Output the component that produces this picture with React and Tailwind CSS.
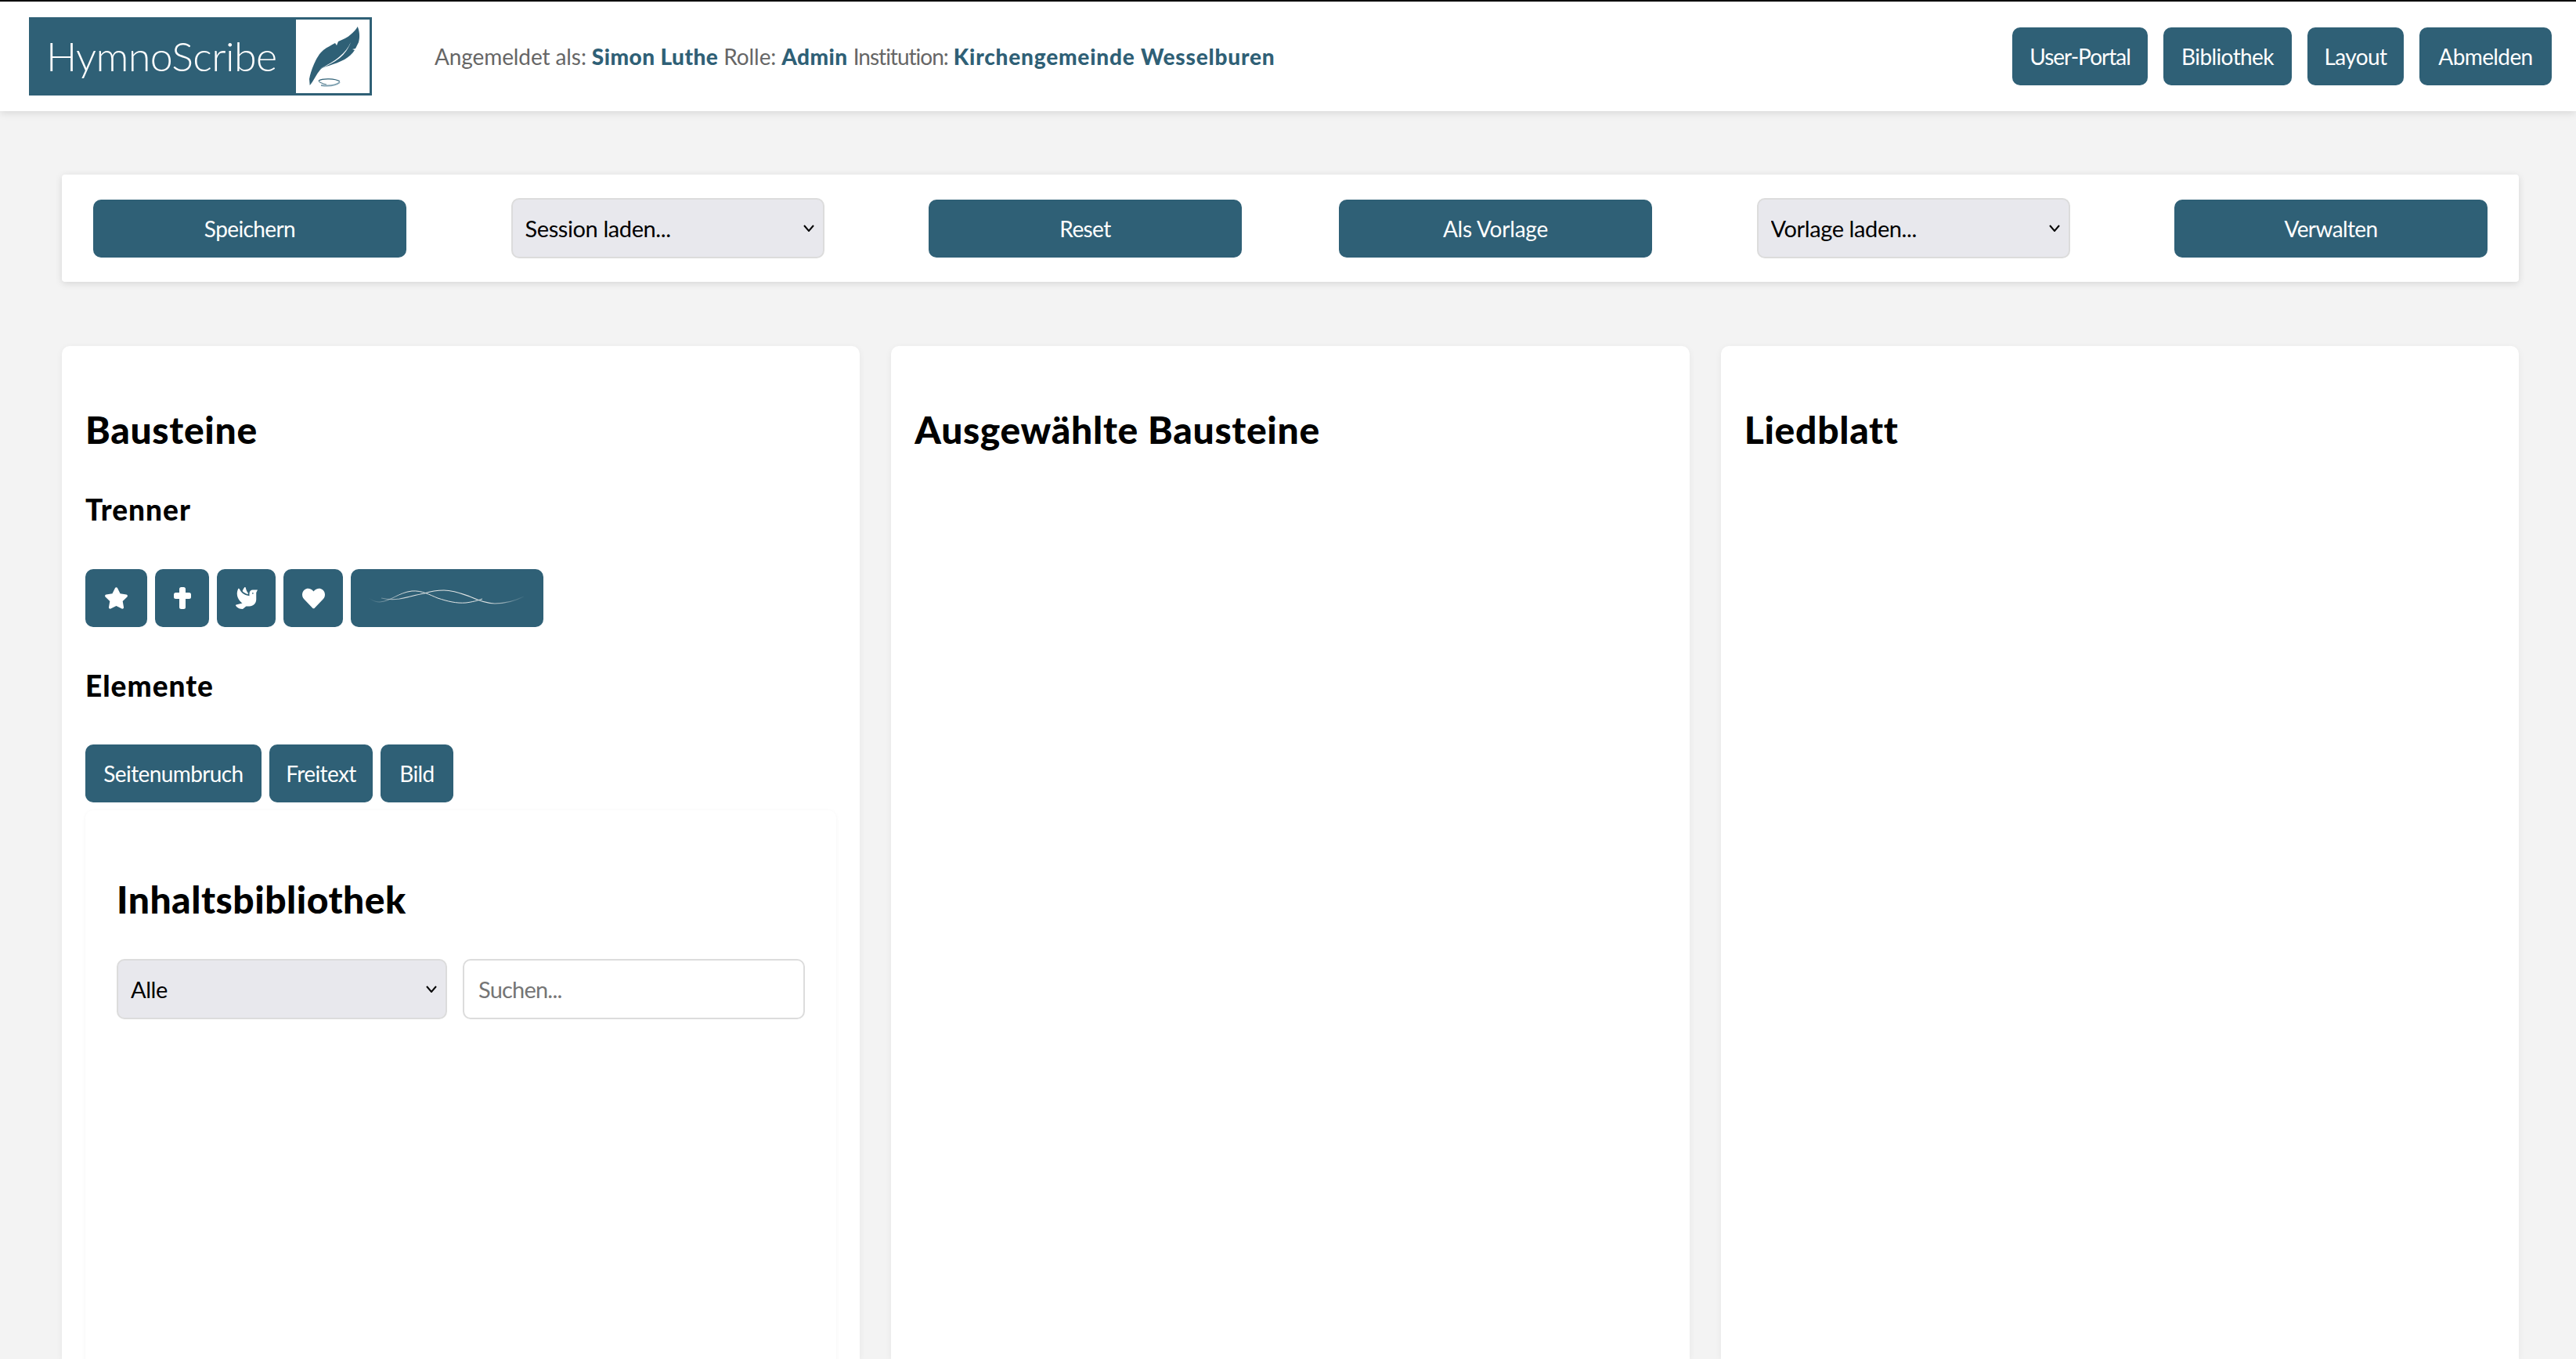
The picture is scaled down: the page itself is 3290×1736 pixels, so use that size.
import React from "react";
import { FaStar, FaDove, FaHeart } from "react-icons/fa";

const btn = "bg-[#2f6076] text-white rounded-[10px] flex items-center justify-center text-[28px] tracking-[-0.6px] h-[74px]";
const field = "h-[77px] border-2 border-[#dcdcdc] rounded-[10px] text-[29px] tracking-[-0.4px] text-black";
const strong = "font-black text-[#2f6076] tracking-[0.45px]";

const Quill = () => (
  <svg viewBox="0 0 94 94" className="w-[94px] h-[94px]">
    <path
      d="M78.7 9 C81 14 82 22 80 29 L76 37 L72 38 L75 39 C72 44 67 48 62 51 C56 54 48 57 42 59 C38 60 34 61 32 63 C28 67 24 75 20 81 L17.7 84 L17 76 C18 70 20 64 23 57 C26 50 30 43 35 39 C40 35 45 33 50 30 L52 33 L54 28 C60 25 66 23 70 19 C74 16 77 12 78.7 9 Z"
      fill="#2f6076"
    />
    <path d="M30 63 C40 58 48 54 56 47 C62 42 67 36 70 29 C67 37 62 44 56 49 C48 55 40 59 30 63 Z" fill="#fff" />
    <path d="M29 78 C34 75 50 75 56 79" fill="none" stroke="#2f6076" strokeWidth="1.2" />
    <path d="M29 78 C30 81 34 82 39 83" fill="none" stroke="#5f8596" strokeWidth="1.1" />
    <path d="M32 84 C40 85 50 85 56 80" fill="none" stroke="#7ea0b0" strokeWidth="2" />
  </svg>
);

const Cross = () => (
  <svg viewBox="0 0 22 28" className="w-[22px] h-[28px]" fill="#fff">
    <rect x="7" y="0" width="8" height="28" rx="2.5" />
    <rect x="0" y="7" width="22" height="8" rx="2.5" />
  </svg>
);

const Divider = () => (
  <svg viewBox="0 0 200 24" className="w-[200px] h-[24px]" fill="none">
    <defs>
      <linearGradient id="fade" gradientUnits="userSpaceOnUse" x1="0" y1="0" x2="200" y2="0">
        <stop offset="0" stopColor="#dfe3e3" stopOpacity="0" />
        <stop offset="0.25" stopColor="#dfe3e3" />
        <stop offset="0.75" stopColor="#dfe3e3" />
        <stop offset="1" stopColor="#dfe3e3" stopOpacity="0" />
      </linearGradient>
    </defs>
    <path d="M0 12 C6 16 10 17 14 17 C28 16 38 5 55 3 C68 2 78 8 88 12 C100 16 112 19 124 18 C132 17 140 15 145 13" stroke="url(#fade)" strokeWidth="1" />
    <path d="M16 12 C24 14 32 14 39 13 C50 11 60 8 71 6 C80 3 88 2 96 2 C108 2 118 6 129 10 C140 15 150 19 161 19 C175 19 188 15 198 10" stroke="url(#fade)" strokeWidth="1.2" />
  </svg>
);

const Chevron = () => (
  <svg viewBox="0 0 14 9" className="absolute right-[13px] top-[34px] w-[14px] h-[9px] pointer-events-none" fill="none">
    <path d="M1 1 L7 8 L13 1" stroke="#000" strokeWidth="2" />
  </svg>
);

const HeaderButton = ({ label, width }) => (
  <button className={`${btn} ${width}`}>{label}</button>
);

const Select = ({ label, width }) => (
  <div className={`relative ${width}`}>
    <select className={`${field} w-full appearance-none bg-[#e8e8ed] px-[16px]`} defaultValue={label}>
      <option>{label}</option>
    </select>
    <Chevron />
  </div>
);

const Panel = ({ title, children }) => (
  <section className="flex-1 bg-white rounded-t-[10px] shadow-[0_2px_8px_rgba(0,0,0,0.06)] px-[30px] pt-[78px]">
    <h2 className="text-[48px] leading-[58px] font-black tracking-[0.7px] text-black">{title}</h2>
    {children}
  </section>
);

export default function App() {
  return (
    <div className="h-screen overflow-hidden flex flex-col bg-[#f3f3f3] font-['Lato',sans-serif]">
      <header className="h-[142px] shrink-0 bg-white border-t-2 border-black shadow-[0_2px_10px_rgba(0,0,0,0.12)] flex items-center pl-[37px] pr-[31px]">
        <div className="w-[438px] h-[100px] bg-[#2f6076] flex items-center justify-between pl-[22px] pr-[3px]">
          <span className="text-white text-[52px] font-light tracking-[-0.6px] leading-none -mt-[2px]">HymnoScribe</span>
          <div className="w-[94px] h-[94px] bg-white">
            <Quill />
          </div>
        </div>
        <p className="ml-[80px] text-[28px] tracking-[-0.1px] text-[#666666]">
          Angemeldet als: <b className={strong}>Simon Luthe</b> Rolle: <b className={strong}>Admin</b> <span className="tracking-[-1px]">Institution:</span> <b className="font-black text-[#2f6076] tracking-[0.8px]">Kirchengemeinde Wesselburen</b>
        </p>
        <nav className="ml-auto flex gap-[20px]">
          <HeaderButton label={<span className="tracking-[-1px]">User-Portal</span>} width="w-[173px]" />
          <HeaderButton label="Bibliothek" width="w-[164px]" />
          <HeaderButton label="Layout" width="w-[123px]" />
          <HeaderButton label="Abmelden" width="w-[169px]" />
        </nav>
      </header>

      <div className="ml-[79px] mr-[73px] mt-[81px] h-[137px] shrink-0 bg-white rounded-[4px] shadow-[0_2px_10px_rgba(0,0,0,0.12)] flex items-center justify-between px-[40px]">
        <div className="flex items-center gap-[133.5px]">
          <button className={`${btn} w-[400px]`}>Speichern</button>
          <Select label="Session laden..." width="w-[400px]" />
          <button className={`${btn} w-[400px]`}>Reset</button>
        </div>
        <div className="flex items-center gap-[133.5px]">
          <button className={`${btn} w-[400px]`}><span className="tracking-[-0.2px]">Als Vorlage</span></button>
          <Select label="Vorlage laden..." width="w-[400px]" />
          <button className={`${btn} w-[400px]`}>Verwalten</button>
        </div>
      </div>

      <main className="flex-1 ml-[79px] mr-[73px] mt-[82px] flex gap-[40px] min-h-0">
        <Panel title="Bausteine">
          <h3 className="mt-[51px] text-[37px] leading-[44px] font-black tracking-[1px] text-black">Trenner</h3>
          <div className="mt-[54px] flex gap-[10px]">
            <button className={`${btn} w-[79px]`}><FaStar className="w-[31px] h-[28px]" /></button>
            <button className={`${btn} w-[69px]`}><Cross /></button>
            <button className={`${btn} w-[75px]`}><FaDove className="w-[28px] h-[28px]" /></button>
            <button className={`${btn} w-[76px]`}><FaHeart className="w-[29px] h-[29px]" /></button>
            <button className={`${btn} w-[246px]`}><Divider /></button>
          </div>
          <h3 className="mt-[53px] text-[37px] leading-[44px] font-black tracking-[1px] text-black">Elemente</h3>
          <div className="mt-[53px] flex gap-[10px]">
            <button className={`${btn} w-[225px]`}>Seitenumbruch</button>
            <button className={`${btn} w-[132px]`}>Freitext</button>
            <button className={`${btn} w-[93px]`}>Bild</button>
          </div>
          <div className="h-[1000px] mt-[10px] rounded-t-[10px] shadow-[0_1px_5px_rgba(0,0,0,0.05)] px-[40px] pt-[85px]">
            <h2 className="text-[48px] leading-[58px] font-black tracking-[0.5px] text-black">Inhaltsbibliothek</h2>
            <div className="mt-[47px] flex gap-[20px]">
              <Select label="Alle" width="w-[422px]" />
              <input
                placeholder="Suchen..."
                className={`${field} flex-1 min-w-0 bg-white pl-[18px] pr-[16px] tracking-[-0.8px] placeholder:text-[#757575]`}
              />
            </div>
          </div>
        </Panel>
        <Panel title="Ausgewählte Bausteine" />
        <Panel title="Liedblatt" />
      </main>
    </div>
  );
}
